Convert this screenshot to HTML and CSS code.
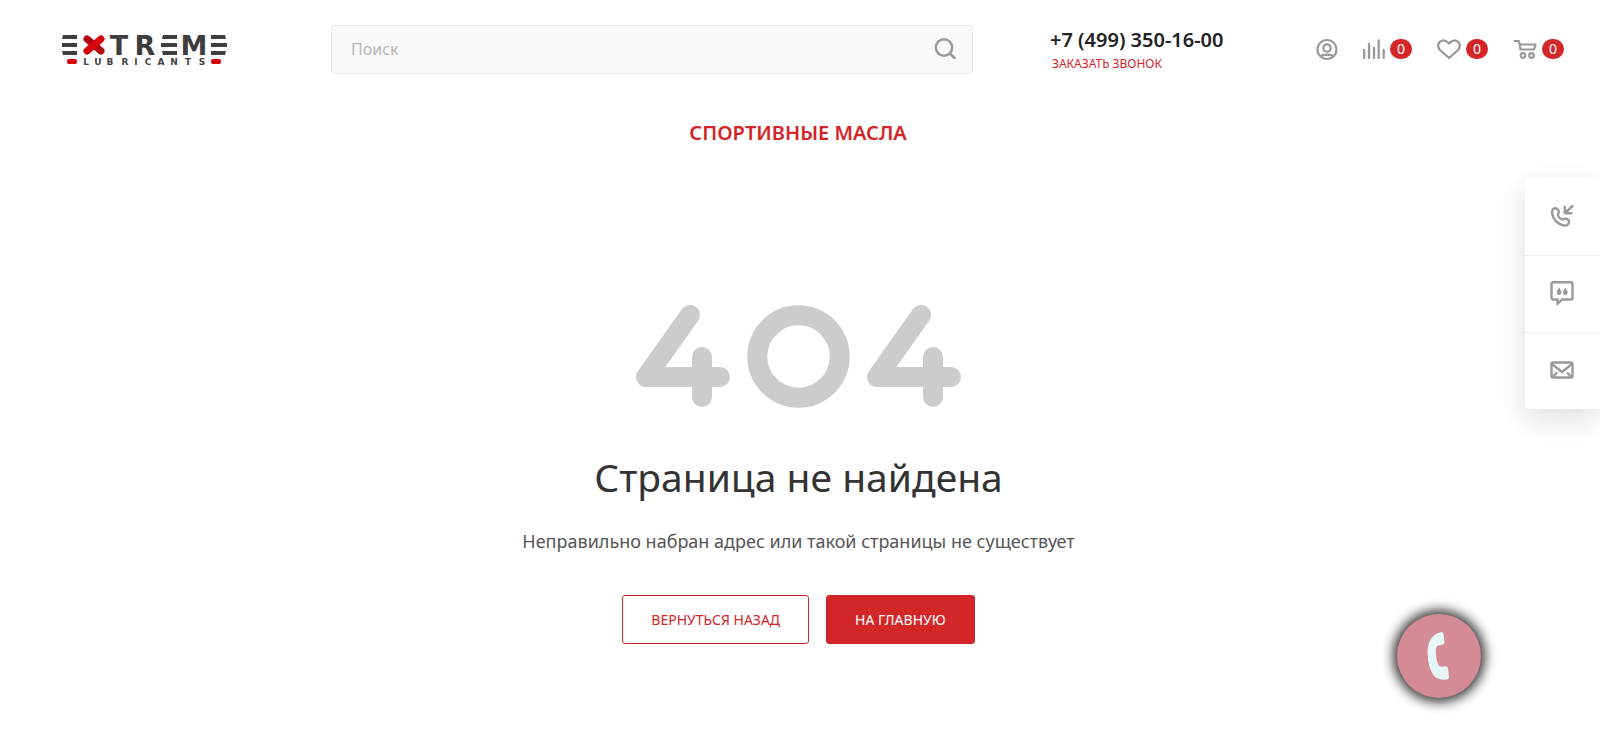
FILE: index.html
```
<!DOCTYPE html>
<html lang="ru">
<head>
<meta charset="utf-8">
<meta name="viewport" content="width=device-width, initial-scale=1">
<title>Страница не найдена</title>
<link rel="stylesheet" href="styles.css">
</head>
<body>
<header class="header">
  <a class="logo" href="#" aria-label="Extreme Lubricants">
    <svg class="logo-art" width="170" height="36" viewBox="0 0 170 36">
      <g fill="#3d3d3d">
        <path d="M3 4H17V8H2zM2 12H17V16H2zM2 20H17V24H3z"/>
        <path d="M103 4H117V8H102zM101 12H117V16H101zM102 20H117V24H103z"/>
        <path d="M151 4H165L166 8H151zM151 12H167V16H151zM151 20H166L165 24H151z"/>
      </g>
      <g stroke-width="7" stroke-linecap="round">
        <line x1="27" y1="8" x2="41" y2="20" stroke="#b00610"/>
        <line x1="41" y1="8" x2="27" y2="20" stroke="#d9030f"/>
      </g>
      <g class="logo-name" text-anchor="middle">
        <text x="59" y="24">T</text><text x="85" y="24">R</text><text x="134" y="24">M</text>
      </g>
      <g class="logo-sub" text-anchor="middle">
        <text x="26" y="34">L</text><text x="38" y="34">U</text><text x="50" y="34">B</text><text x="65" y="34">R</text><text x="76" y="34">I</text><text x="88" y="34">C</text><text x="101" y="34">A</text><text x="114" y="34">N</text><text x="128" y="34">T</text><text x="142" y="34">S</text>
      </g>
      <rect x="7" y="28" width="10" height="5" rx="2" fill="#d9030f"/>
      <rect x="151" y="28" width="10" height="5" rx="2" fill="#d9030f"/>
    </svg>
  </a>
  <form class="search" role="search">
    <input class="search-input" type="search" placeholder="Поиск" aria-label="Поиск">
    <button class="search-button" type="button" aria-label="Найти">
      <svg width="22" height="22" viewBox="0 0 22 22" fill="none" stroke="#999" stroke-width="2.500" stroke-linecap="round"><circle cx="10" cy="9.500" r="8.200"/><path d="M16 15.500 20.500 20"/></svg>
    </button>
  </form>
  <div class="contacts">
    <a class="phone" href="tel:+74993501600">+7 (499) 350-16-00</a>
    <button class="callback" type="button">Заказать звонок</button>
  </div>
  <div class="tools">
    <a class="tool" href="#" aria-label="Личный кабинет">
      <svg width="22" height="22" viewBox="0 0 22 22" fill="none" stroke="#999" stroke-width="2.200"><circle cx="11" cy="11.500" r="9.500"/><circle cx="11" cy="10" r="3.700"/><path d="M4.500 18.500c2.500-2.600 10.500-2.600 13 0"/></svg>
    </a>
    <a class="tool" href="#" aria-label="Сравнение">
      <svg width="22" height="22" viewBox="0 0 22 22" stroke="#999" stroke-width="2.300" stroke-linecap="round"><path d="M1.200 12v8M6 6v14M11 10v10M15.700 2.500v17.500M20.700 12v8"/></svg>
      <span class="badge">0</span>
    </a>
    <a class="tool" href="#" aria-label="Избранное">
      <svg width="24" height="22" viewBox="0 0 24 22" fill="none" stroke="#999" stroke-width="2.300" stroke-linejoin="round"><path d="M12 20 3 12C.5 9.500.7 5.500 3 3.700 5.800 1.700 9.200 2.300 12 5.500c2.800-3.200 6.200-3.800 9-1.800 2.300 1.800 2.500 5.800 0 8.300z"/></svg>
      <span class="badge">0</span>
    </a>
    <a class="tool" href="#" aria-label="Корзина">
      <svg width="24" height="22" viewBox="0 0 24 22" fill="none" stroke="#999" stroke-width="2.200" stroke-linecap="round" stroke-linejoin="round"><path d="M1.500 3H6l1.500 8.500h13.500L22.500 6.500H7"/><circle cx="10" cy="17.500" r="2.300"/><circle cx="18.500" cy="17.500" r="2.300"/></svg>
      <span class="badge">0</span>
    </a>
  </div>
</header>
<nav class="menu"><a class="menu-link" href="#">Спортивные масла</a></nav>
<main class="error">
  <svg class="error-art" role="img" aria-label="404" width="326" height="104" viewBox="0 0 326 104" fill="none" stroke="#ccc" stroke-width="20" stroke-linecap="round" stroke-linejoin="round">
    <path d="M54 10 10 72H84M66 52V92"/>
    <circle cx="162.500" cy="51.500" r="41.200"/>
    <path d="M285 10 241 72H315M297 52V92"/>
  </svg>
  <h1 class="error-title">Страница не найдена</h1>
  <p class="error-text">Неправильно набран адрес или такой страницы не существует</p>
  <div class="actions">
    <button class="button button-outline" type="button">Вернуться назад</button>
    <a class="button button-solid" href="#">На главную</a>
  </div>
</main>
<aside class="side">
  <button class="side-button" type="button" aria-label="Заказать звонок">
    <svg width="24" height="24" viewBox="0 0 24 24" fill="none" stroke="#999" stroke-width="2.400" stroke-linecap="round" stroke-linejoin="round"><path d="M22.500 2 15 9M14.800 3V9.300H21.500"/><path d="M2 9C1.500 5.500 4 3.800 6.500 4.500 9 5.500 9.500 8.500 8 10.500 7.500 12 10.500 15.500 12.500 15.500 14.500 14 18 14.500 19 17 19.500 20 17 22 14 21.500 8 20 3 15.500 2 9Z"/></svg>
  </button>
  <button class="side-button" type="button" aria-label="Оставить отзыв">
    <svg width="24" height="24" viewBox="0 0 24 24" fill="none" stroke="#999" stroke-width="2.400" stroke-linejoin="round"><path d="M3.500 1.200h17q2 0 2 2v13.300q0 2-2 2h-8.500L7.500 23v-4.500h-4q-2 0-2-2V3.200q0-2 2-2z"/><g fill="#999" stroke="none"><path d="M10 6.500V8.500Q11.500 9.500 11.500 11.500 11 14 9 14 6.800 14 6.800 11.500 7 8 10 6.500ZM16.200 6.500V8.500Q17.700 9.500 17.700 11.500 17.200 14 15.200 14 13 14 13 11.500 13.200 8 16.200 6.500Z"/></g></svg>
  </button>
  <button class="side-button" type="button" aria-label="Написать сообщение">
    <svg width="24" height="18" viewBox="0 0 24 18" fill="none" stroke="#999" stroke-width="2.400" stroke-linejoin="round"><rect x="1.500" y="1.500" width="21" height="15" rx="1.500"/><path d="M2 3l10 8 10-8M3 15.500l4-4M21 15.500l-4-4"/></svg>
  </button>
</aside>
<button class="call" type="button" aria-label="Позвонить">
  <svg width="24" height="50" viewBox="0 0 24 50" fill="#e6f7f8"><path d="M14 1.500Q17 0 17.500 3L18.500 11Q18.500 13.500 16 14L12 14.500Q10 15 9.800 19 9.800 28 12 33 13 36 15 35.800L19 35.200Q21.500 35 22 37L23 46Q23 48.500 20 48.500 11 49.500 7 43.500 2 36 1.500 22 1.500 5 14 1.500Z"/></svg>
</button>
</body>
</html>
```
FILE: styles.css
```
* {
  box-sizing: border-box;
}

body {
  margin: 0;
  min-height: 100vh;
  background: #fff;
  color: #333;
  font-family: "Noto Sans", sans-serif;
  font-size: 16px;
}

a {
  color: inherit;
  text-decoration: none;
}

button {
  padding: 0;
  border: 0;
  background: none;
  font-family: inherit;
  cursor: pointer;
}

svg {
  display: block;
  flex: none;
}

.header {
  display: flex;
  align-items: center;
  padding: 24px 36px 0 60px;
}

.logo {
  flex: none;
  margin-right: 101px;
}

.logo-art {
  overflow: visible;
}

.logo-name {
  fill: #3d3d3d;
  font: 700 27px "DejaVu Sans", sans-serif;
}

.logo-sub {
  fill: #444;
  font: 700 9px "DejaVu Sans", sans-serif;
}

.search {
  position: relative;
  flex: 1;
  max-width: 800px;
}

.search-input {
  display: block;
  width: 100%;
  height: 49px;
  padding: 0 60px 0 19px;
  border: 1px solid #ececec;
  border-radius: 3px;
  background: #fafafa;
  font-family: inherit;
  font-size: 16px;
  appearance: none;
}

.search-input::placeholder {
  color: #b6b6b6;
}

.search-button {
  position: absolute;
  top: 0;
  right: 17px;
  height: 49px;
}

.contacts {
  display: flex;
  flex: none;
  flex-direction: column;
  align-items: flex-start;
  width: 267px;
  padding-top: 2px;
  padding-left: 77px;
}

.phone {
  color: #222;
  font-size: 20px;
  font-weight: 600;
  line-height: 28px;
  white-space: nowrap;
}

.callback {
  padding-left: 2px;
  color: #d32628;
  font-size: 12px;
  line-height: 20px;
  text-transform: uppercase;
}

.tools {
  display: flex;
  flex: none;
  gap: 25px;
  margin-left: auto;
  padding-left: 76px;
}

.tool {
  display: flex;
  align-items: center;
  gap: 5px;
}

.badge {
  width: 22px;
  border-radius: 10px;
  background: #d32628;
  color: #fff;
  font-size: 14px;
  line-height: 20px;
  text-align: center;
}

.menu {
  padding-top: 45px;
  padding-right: 4px;
  text-align: center;
}

.menu-link {
  color: #d32628;
  font-size: 20px;
  font-weight: 600;
  line-height: 28px;
  text-transform: uppercase;
}

.error {
  display: flex;
  flex-direction: column;
  align-items: center;
  padding: 158px 3px 60px 0;
}

.error-title {
  margin: 42px 0 0;
  font-size: 39px;
  font-weight: 400;
  line-height: 52px;
}

.error-text {
  margin: 24px 0 0;
  color: #555;
  font-size: 18px;
  line-height: 28px;
}

.actions {
  display: flex;
  gap: 17px;
  margin-top: 40px;
}

.button {
  padding: 0 28px;
  border: 1px solid #d32628;
  border-radius: 3px;
  font-size: 14px;
  line-height: 47px;
  text-transform: uppercase;
}

.button-outline {
  background: #fff;
  color: #d32628;
}

.button-solid {
  background: #d32628;
  color: #fff;
}

.side {
  position: fixed;
  top: 178px;
  right: 0;
  width: 75px;
  border-radius: 4px 0 0 4px;
  background: #fff;
  box-shadow: 0 10px 30px rgba(0, 0, 0, 0.13);
}

.side-button {
  display: flex;
  align-items: center;
  justify-content: center;
  width: 100%;
  height: 77px;
  padding: 0 2px 2px 0;
}

.side-button + .side-button {
  border-top: 1px solid #eee;
}

.call {
  position: fixed;
  right: 119px;
  bottom: 56px;
  display: flex;
  align-items: center;
  justify-content: center;
  width: 84px;
  height: 84px;
  padding-right: 3px;
  border-radius: 50%;
  background: #d48b95;
  box-shadow: 0 0 12px 4px rgba(0, 0, 0, 0.8);
}
```
